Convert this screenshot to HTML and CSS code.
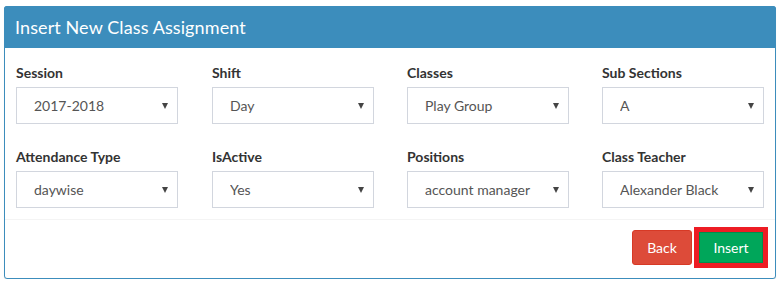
FILE: index.html
```html
<!DOCTYPE html>
<html lang="en">
<head>
  <meta charset="utf-8" />
  <meta name="viewport" content="width=device-width, initial-scale=1.0"/>
  <title>Insert New Class Assignment</title>
  <link rel="stylesheet" href="styles.css">
</head>
<body>

  <div class="box">
    <div class="box-header">
      <h3>Insert New Class Assignment</h3>
    </div>

    <div class="box-body">
      <div class="field">
        <label>Session</label>
        <div class="select-wrap">
          <select><option>2017-2018</option></select>
        </div>
      </div>
      <div class="field">
        <label>Shift</label>
        <div class="select-wrap">
          <select><option>Day</option></select>
        </div>
      </div>
      <div class="field">
        <label>Classes</label>
        <div class="select-wrap">
          <select><option>Play Group</option></select>
        </div>
      </div>
      <div class="field">
        <label>Sub Sections</label>
        <div class="select-wrap">
          <select><option>A</option></select>
        </div>
      </div>

      <div class="field">
        <label>Attendance Type</label>
        <div class="select-wrap">
          <select><option>daywise</option></select>
        </div>
      </div>
      <div class="field">
        <label>IsActive</label>
        <div class="select-wrap">
          <select><option>Yes</option></select>
        </div>
      </div>
      <div class="field">
        <label>Positions</label>
        <div class="select-wrap">
          <select><option>account manager</option></select>
        </div>
      </div>
      <div class="field">
        <label>Class Teacher</label>
        <div class="select-wrap">
          <select><option>Alexander Black</option></select>
        </div>
      </div>
    </div>

    <div class="box-footer">
      <button class="btn btn-danger">Back</button>
      <span class="highlight">
        <button class="btn btn-success">Insert</button>
      </span>
    </div>
  </div>

</body>
</html>
```

FILE: styles.css
```css
:root {
  --primary: #3c8dbc;
  --text:    #333;
  --muted:   #555;
  --line:    #d2d6de;
  --danger:  #dd4b39;
  --success: #00a65a;
  --mark:    #ed1c24;
}
*, *::before, *::after { box-sizing: border-box; margin:0; padding:0; }
body {
  font-family: "Lato", "Open Sans", sans-serif;
  background:#fff;color:var(--text);
  padding:6px 5px 0 4px;
}

.box {
  border:1px solid var(--primary);border-radius:3px;
  background:#fff;height:273px;
  box-shadow:0 1px 1px rgba(0,0,0,.1);
}
.box-header {
  background:var(--primary);color:#fff;
  height:42px;display:flex;align-items:center;
  padding:0 11px;margin:-1px -1px 0;
  border-radius:3px 3px 0 0;
}
.box-header h3 { font-size:18px;font-weight:400;letter-spacing:.1px; }

.box-body {
  display:grid;
  grid-template-columns:196px 195px 195px 195px;
  row-gap:25px;
  padding:17px 11px 11px;
  border-bottom:1px solid #f4f4f4;
}
.field label {
  display:block;font-size:14px;font-weight:700;
  color:var(--text);margin-bottom:6px;line-height:16px;
}
.select-wrap { position:relative;width:162px; }
.select-wrap select {
  appearance:none;-webkit-appearance:none;
  width:100%;height:37px;
  border:1px solid var(--line);border-radius:0;
  background:#fff;color:var(--muted);
  font-family:inherit;font-size:14px;
  padding:0 22px 0 17px;
}
.select-wrap::after {
  content:"";position:absolute;
  right:10px;top:16px;
  border-left:3px solid transparent;border-right:3px solid transparent;
  border-top:6px solid #444;
}

.box-footer {
  display:flex;justify-content:flex-end;align-items:center;
  gap:2px;padding:7px 7px 0 0;
}
.btn {
  font-family:inherit;font-size:14px;color:#fff;
  border:1px solid transparent;cursor:pointer;
}
.btn-danger {
  background:var(--danger);border-color:#d73925;
  border-radius:3px;width:60px;height:35px;
}
.highlight {
  display:inline-block;border:5px solid var(--mark);
}
.btn-success {
  display:block;background:var(--success);border-color:#008d4c;
  width:64px;height:31px;border-radius:0;
}
```
